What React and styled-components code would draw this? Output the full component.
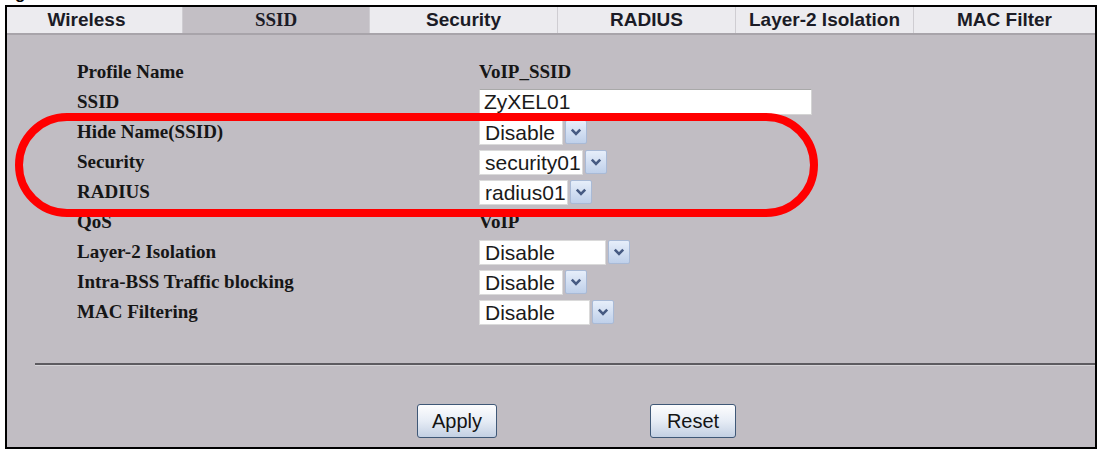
import React from 'react';
import styled, { createGlobalStyle } from 'styled-components';

const GlobalStyle = createGlobalStyle`
  html, body {
    margin: 0;
    padding: 0;
    background: #ffffff;
  }
  body {
    width: 1101px;
    height: 454px;
    overflow: hidden;
    font-family: "Liberation Sans", Arial, sans-serif;
  }
`;

// only the tail of the figure caption shows above the frame
const Caption = styled.div`
  height: 5px;
  overflow: hidden;
  font: bold 17px/20px "Liberation Sans", Arial, sans-serif;
  color: #000;

  span {
    display: block;
    margin-top: -16px;
  }
`;

const Frame = styled.div`
  position: relative;
  margin-left: 5px;
  width: 1088px;
  height: 440px;
  border: 2px solid #000;
  background: #c1bdc3;
`;

const TabBar = styled.div`
  display: flex;
  height: 26px;
  background: #ecebef;
  border-bottom: 2px solid #a8a4aa;
`;

const Tab = styled.div`
  width: ${(p) => p.$w}px;
  display: flex;
  align-items: center;
  justify-content: center;
  padding-right: ${(p) => p.$pr || 0}px;
  border-left: ${(p) => (p.$first ? 'none' : '1px solid #cfcdd2')};
  background: ${(p) => (p.$active ? '#c3bfc5' : 'transparent')};
  font: bold 19px ${(p) =>
    p.$serif
      ? '"Liberation Serif", "Times New Roman", serif'
      : '"Liberation Sans", Arial, sans-serif'};
  color: #1b1b26;
  box-sizing: border-box;
`;

const Form = styled.div`
  padding: 22px 0 0 70px;
`;

const Row = styled.div`
  display: grid;
  grid-template-columns: 402px 1fr;
  align-items: center;
  height: 30px;
`;

const Label = styled.div`
  font: bold 19px "Liberation Serif", "Times New Roman", serif;
  color: #161616;
`;

const TextInput = styled.div`
  width: 333px;
  height: 26px;
  box-sizing: border-box;
  background: #fff;
  border: 1px solid #d4d4d4;
  border-top-color: #a9a9a9;
  padding-left: 4px;
  font: 21px/24px "Liberation Sans", Arial, sans-serif;
  color: #1a1a1a;
`;

const Select = styled.div`
  display: inline-flex;
  align-items: center;
  gap: 2px;
  height: 25px;
`;

const Field = styled.div`
  width: ${(p) => p.$w}px;
  height: 25px;
  box-sizing: border-box;
  background: #fff;
  border: 1px solid #dadada;
  padding-left: 5px;
  font: 21px/23px "Liberation Sans", Arial, sans-serif;
  color: #1a1a1a;
`;

const Arrow = styled.div`
  width: 22px;
  height: 24px;
  box-sizing: border-box;
  border: 1px solid #a9bad6;
  border-radius: 2px;
  background: linear-gradient(#e6eefa, #bfd0ea);
  display: flex;
  align-items: center;
  justify-content: center;
`;

const Oval = styled.div`
  position: absolute;
  left: 8px;
  top: 106px;
  width: 803px;
  height: 104px;
  box-sizing: border-box;
  border: 8px solid #ff0000;
  border-radius: 999px;
  pointer-events: none;
`;

const Divider = styled.div`
  margin: 36px 0 0 28px;
  border-top: 2px solid #5d5b60;
  border-bottom: 1px solid #d6d4d8;
`;

const ButtonRow = styled.div`
  display: flex;
  gap: 153px;
  padding-left: 410px;
  margin-top: 38px;
`;

const Button = styled.button`
  width: ${(p) => p.$w}px;
  height: 34px;
  border: 1px solid #3f5877;
  border-radius: 3px;
  background: linear-gradient(#fdfdfe, #e6ecf5 50%, #c3d0e3);
  font: 20px "Liberation Sans", Arial, sans-serif;
  color: #141414;
  padding: 0;
`;

const Chevron = () => (
  <svg width="12" height="10" viewBox="0 0 12 10">
    <path d="M1.8 2.6 L6 6.8 L10.2 2.6" fill="none" stroke="#465a82" strokeWidth="2.6" />
  </svg>
);

const Drop = ({ value, w }) => (
  <Select>
    <Field $w={w}>{value}</Field>
    <Arrow>
      <Chevron />
    </Arrow>
  </Select>
);

const tabs = [
  { name: 'Wireless', w: 175, pr: 16 },
  { name: 'SSID', w: 187, active: true, serif: true },
  { name: 'Security', w: 188 },
  { name: 'RADIUS', w: 178 },
  { name: 'Layer-2 Isolation', w: 178 },
  { name: 'MAC Filter', w: 182 },
];

const rows = [
  { label: 'Profile Name', text: 'VoIP_SSID' },
  { label: 'SSID', input: 'ZyXEL01' },
  { label: 'Hide Name(SSID)', select: 'Disable', w: 84 },
  { label: 'Security', select: 'security01', w: 104 },
  { label: 'RADIUS', select: 'radius01', w: 89 },
  { label: 'QoS', text: 'VoIP' },
  { label: 'Layer-2 Isolation', select: 'Disable', w: 127 },
  { label: 'Intra-BSS Traffic blocking', select: 'Disable', w: 84 },
  { label: 'MAC Filtering', select: 'Disable', w: 111 },
];

const renderValue = (row) => {
  if (row.input) return <TextInput>{row.input}</TextInput>;
  if (row.select) {
    return (
      <div>
        <Drop value={row.select} w={row.w} />
      </div>
    );
  }
  return <Label>{row.text}</Label>;
};

const App = () => (
  <>
    <GlobalStyle />
    <Caption>
      <span>Figure</span>
    </Caption>
    <Frame>
      <TabBar>
        {tabs.map((t, i) => (
          <Tab
            key={t.name}
            $w={t.w}
            $pr={t.pr}
            $first={i === 0}
            $active={t.active}
            $serif={t.serif}
          >
            {t.name}
          </Tab>
        ))}
      </TabBar>
      <Form>
        {rows.map((row) => (
          <Row key={row.label}>
            <Label>{row.label}</Label>
            {renderValue(row)}
          </Row>
        ))}
      </Form>
      <Oval />
      <Divider />
      <ButtonRow>
        <Button $w={80}>Apply</Button>
        <Button $w={86}>Reset</Button>
      </ButtonRow>
    </Frame>
  </>
);

export default App;
